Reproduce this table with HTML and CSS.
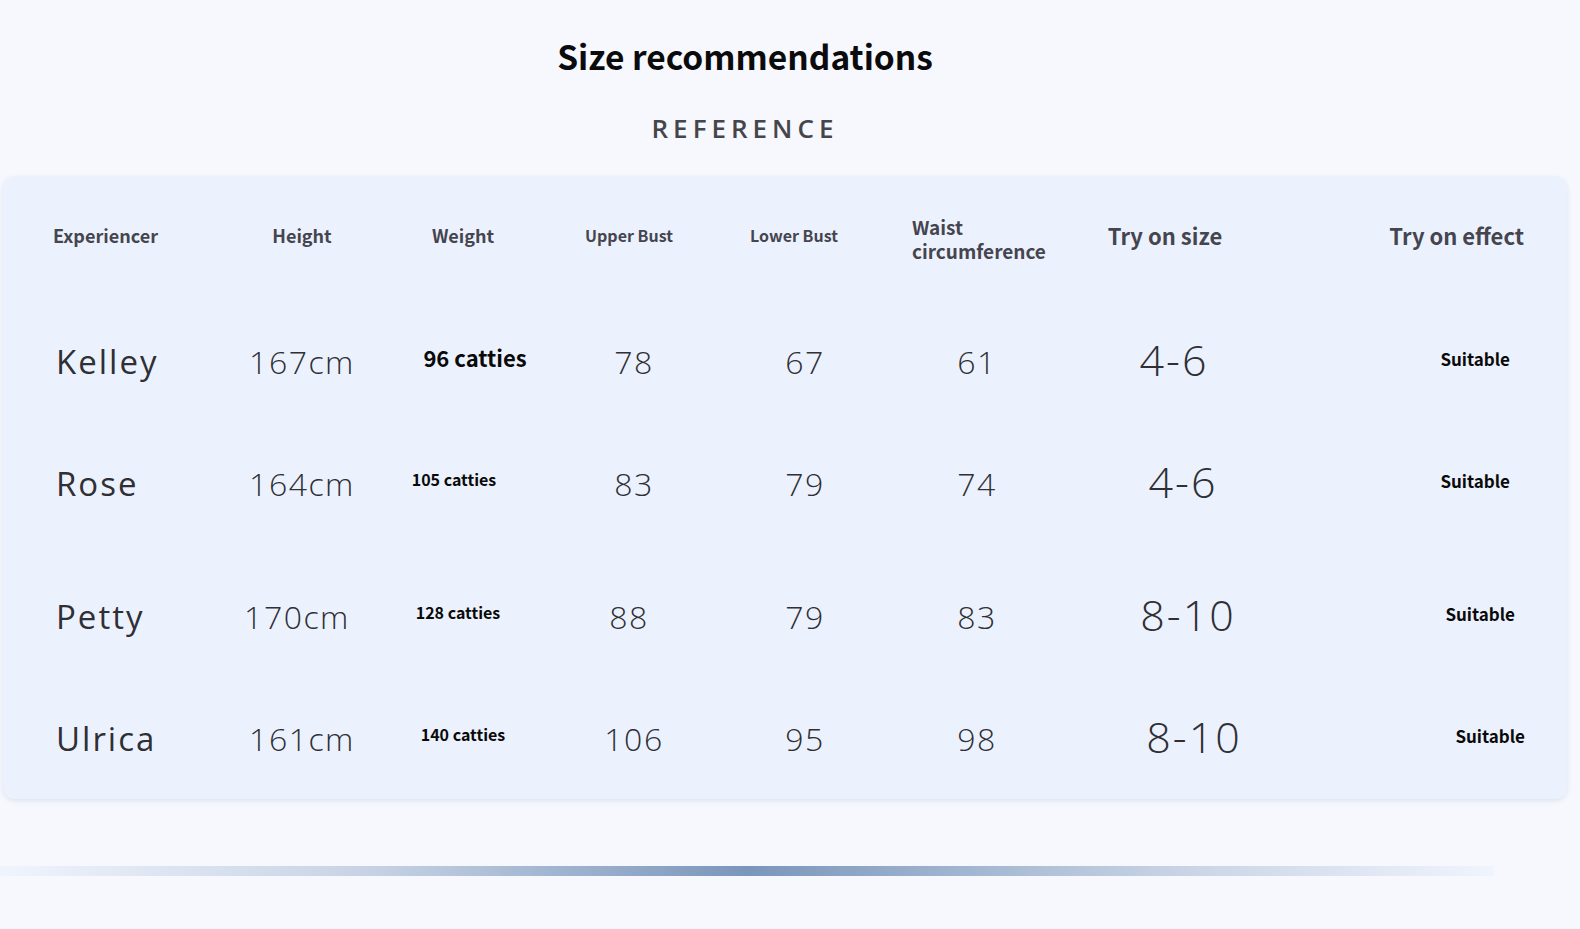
FILE: index.html
```html
<!DOCTYPE html>
<html lang="en">
<head>
<meta charset="utf-8">
<title>Size recommendations</title>
<link rel="stylesheet" href="styles.css">
</head>
<body>
<div class="page">
  <header class="intro">
    <h1 class="title">Size recommendations</h1>
    <div class="subtitle">REFERENCE</div>
  </header>

  <section class="card">
    <div class="row row-head">
      <div class="cell head c-name">Experiencer</div>
      <div class="cell head">Height</div>
      <div class="cell head">Weight</div>
      <div class="cell head small c-upper-head">Upper Bust</div>
      <div class="cell head small c-lower-head">Lower Bust</div>
      <div class="cell head c-waist">Waist<br>circumference</div>
      <div class="cell head big c-size-head">Try on size</div>
      <div class="cell head big c-effect-head">Try on effect</div>
    </div>

    <div class="row row-1">
      <div class="cell name c-name">Kelley</div>
      <div class="cell num">167cm</div>
      <div class="cell weight w-lg shift-p12">96 catties</div>
      <div class="cell num">78</div>
      <div class="cell num">67</div>
      <div class="cell num">61</div>
      <div class="cell size shift-m6">4-6</div>
      <div class="cell effect">Suitable</div>
    </div>

    <div class="row row-2">
      <div class="cell name c-name">Rose</div>
      <div class="cell num">164cm</div>
      <div class="cell weight shift-m9">105 catties</div>
      <div class="cell num">83</div>
      <div class="cell num">79</div>
      <div class="cell num">74</div>
      <div class="cell size shift-p3">4-6</div>
      <div class="cell effect">Suitable</div>
    </div>

    <div class="row row-3">
      <div class="cell name c-name">Petty</div>
      <div class="cell num shift-m5">170cm</div>
      <div class="cell weight shift-m5">128 catties</div>
      <div class="cell num shift-m5">88</div>
      <div class="cell num">79</div>
      <div class="cell num">83</div>
      <div class="cell size shift-p8">8-10</div>
      <div class="cell effect effect-r3">Suitable</div>
    </div>

    <div class="row row-4">
      <div class="cell name c-name">Ulrica</div>
      <div class="cell num">161cm</div>
      <div class="cell weight">140 catties</div>
      <div class="cell num">106</div>
      <div class="cell num">95</div>
      <div class="cell num">98</div>
      <div class="cell size shift-p14">8-10</div>
      <div class="cell effect effect-r4">Suitable</div>
    </div>
  </section>

  <div class="divider"></div>
</div>
</body>
</html>
```

FILE: styles.css
```css
* { box-sizing: border-box; }

html, body {
  margin: 0;
  padding: 0;
  background: #f6f8fe;
}

.page {
  width: 1580px;
  height: 929px;
  padding-top: 34px;
  font-family: "Open Sans", "Liberation Sans", sans-serif;
}

.intro {
  width: 1490px;
  text-align: center;
}

.title {
  margin: 0;
  font-family: "Noto Sans CJK SC", "Open Sans", sans-serif;
  font-weight: 700;
  font-size: 33.5px;
  line-height: 44px;
  color: #0b0b0d;
}

.subtitle {
  margin-top: 34px;
  font-family: "Open Sans", sans-serif;
  font-weight: 600;
  font-size: 26px;
  line-height: 32px;
  letter-spacing: 5px;
  color: #46464a;
}

.card {
  margin: 32px 0 0 3px;
  width: 1564px;
  height: 623px;
  background: #ecf2fd;
  border-radius: 12px;
  box-shadow: 0 2px 5px rgba(60, 80, 120, 0.12);
  display: flex;
  flex-direction: column;
}

.row {
  display: grid;
  grid-template-columns: 219px 160px 162px 180px 162px 182px 224px 275px;
  align-items: stretch;
}

.row-head { height: 120px; }
.row-1 { height: 130px; }
.row-2 { height: 114px; }
.row-3 { height: 152px; }
.row-4 { height: 107px; padding-bottom: 15px; }

.cell {
  display: flex;
  align-items: center;
  justify-content: center;
  white-space: nowrap;
}

.head {
  font-family: "Noto Sans CJK SC", "Open Sans", sans-serif;
  font-weight: 700;
  font-size: 18px;
  line-height: 23px;
  color: #45454f;
  padding-bottom: 2px;
}

.head.small { font-size: 16px; }
.head.big { font-size: 22px; }

.c-name {
  justify-content: flex-start;
  padding-left: 50px;
}

.c-upper-head { padding-right: 10px; }
.c-lower-head { padding-right: 22px; }

.c-waist {
  justify-content: flex-start;
  padding-left: 26px;
  white-space: normal;
  font-size: 19px;
  line-height: 24px;
  padding-bottom: 0;
  padding-top: 6px;
}

.c-size-head { padding-right: 30px; }

.c-effect-head {
  justify-content: flex-end;
  padding-right: 43px;
}

.name {
  font-family: "Open Sans", sans-serif;
  font-weight: 500;
  font-size: 33px;
  letter-spacing: 2px;
  color: #2f2f34;
  padding-left: 53px;
}

.num {
  font-family: "Open Sans", sans-serif;
  font-weight: 300;
  font-size: 32px;
  letter-spacing: 1.5px;
  color: #2f2f35;
}

.weight {
  font-family: "Noto Sans CJK SC", "Open Sans", sans-serif;
  font-weight: 700;
  font-size: 16px;
  color: #0a0a0a;
  padding-bottom: 8px;
}

.weight.w-lg { font-size: 22px; }

.size {
  font-family: "Open Sans", sans-serif;
  font-weight: 300;
  font-size: 43px;
  letter-spacing: 2px;
  color: #2f2f35;
  padding-bottom: 4px;
}

.shift-p3 { padding-left: 6px; }
.shift-p8 { padding-left: 16px; }
.shift-p12 { padding-left: 24px; }
.shift-p14 { padding-left: 28px; }
.shift-m5 { padding-right: 10px; }
.shift-m6 { padding-right: 12px; }
.shift-m9 { padding-right: 18px; }

.effect {
  justify-content: flex-end;
  padding-right: 57px;
  font-family: "Noto Sans CJK SC", "Open Sans", sans-serif;
  font-weight: 700;
  font-size: 17px;
  color: #0a0a0a;
  padding-bottom: 5px;
}

.effect.effect-r3 { padding-right: 52px; }
.effect.effect-r4 { padding-right: 42px; }

.divider {
  margin-top: 67px;
  width: 1494px;
  height: 10px;
  background: linear-gradient(90deg,
    rgba(236, 241, 252, 0.6) 0%,
    #c6d2e4 25%,
    #7a96bb 50%,
    #c6d2e4 78%,
    rgba(236, 241, 252, 0.6) 100%);
}
```
